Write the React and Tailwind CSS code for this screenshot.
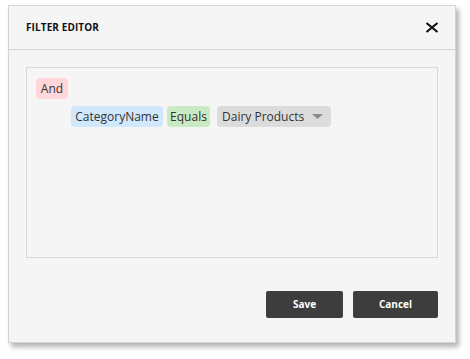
const Chip = ({ className, children }) => (
  <span className={`flex items-center h-[21px] px-[4px] rounded-[4px] text-[12px] text-[#333] ${className}`}>
    {children}
  </span>
);

export default function App() {
  return (
    <div className="w-[470px] h-[359px] bg-white pt-[5px] pl-[8px]" style={{ fontFamily: '"Open Sans", "Noto Sans", sans-serif' }}>
      <div className="w-[448px] h-[338px] bg-[#f5f5f5] border border-[#d4d4d4] shadow-[3px_4px_5px_rgba(0,0,0,0.3)] flex flex-col">
        <div className="h-[44px] flex items-center justify-between pl-[17px] pr-[16px] border-b border-[#d6d6d6]">
          <span className="text-[10px] font-bold text-[#111] tracking-[0.1px]">FILTER EDITOR</span>
          <svg width="14" height="11" viewBox="0 0 14 11">
            <path d="M1.5 1 L12.5 10 M12.5 1 L1.5 10" stroke="#111" strokeWidth="2.2" />
          </svg>
        </div>
        <div className="mx-[17px] mt-[17px] h-[191px] border border-[#d9d9d9] bg-[#f5f5f5] pt-[10px] pl-[9px] flex flex-col items-start">
          <Chip className="bg-[#ffd6d9] w-[32px] justify-center">And</Chip>
          <div className="flex mt-[7px] ml-[35px]">
            <Chip className="bg-[#d1e7fc] w-[92px] justify-center">CategoryName</Chip>
            <Chip className="bg-[#cbeac4] w-[43px] justify-center ml-[4px]">Equals</Chip>
            <Chip className="bg-[#dcdcdc] ml-[7px] w-[114px] justify-between pl-[5px] pr-[8px]">
              <span>Dairy Products</span>
              <svg width="11" height="5" viewBox="0 0 11 5">
                <path d="M0 0 L11 0 L5.5 5 Z" fill="#8a8a8a" />
              </svg>
            </Chip>
          </div>
        </div>
        <div className="flex justify-end gap-[10px] mt-[33px] pr-[17px]">
          <button className="w-[77px] h-[27px] bg-[#3d3d3d] rounded-[2px] text-white text-[10px] font-bold">Save</button>
          <button className="w-[85px] h-[27px] bg-[#3d3d3d] rounded-[2px] text-white text-[10px] font-bold">Cancel</button>
        </div>
      </div>
    </div>
  );
}
